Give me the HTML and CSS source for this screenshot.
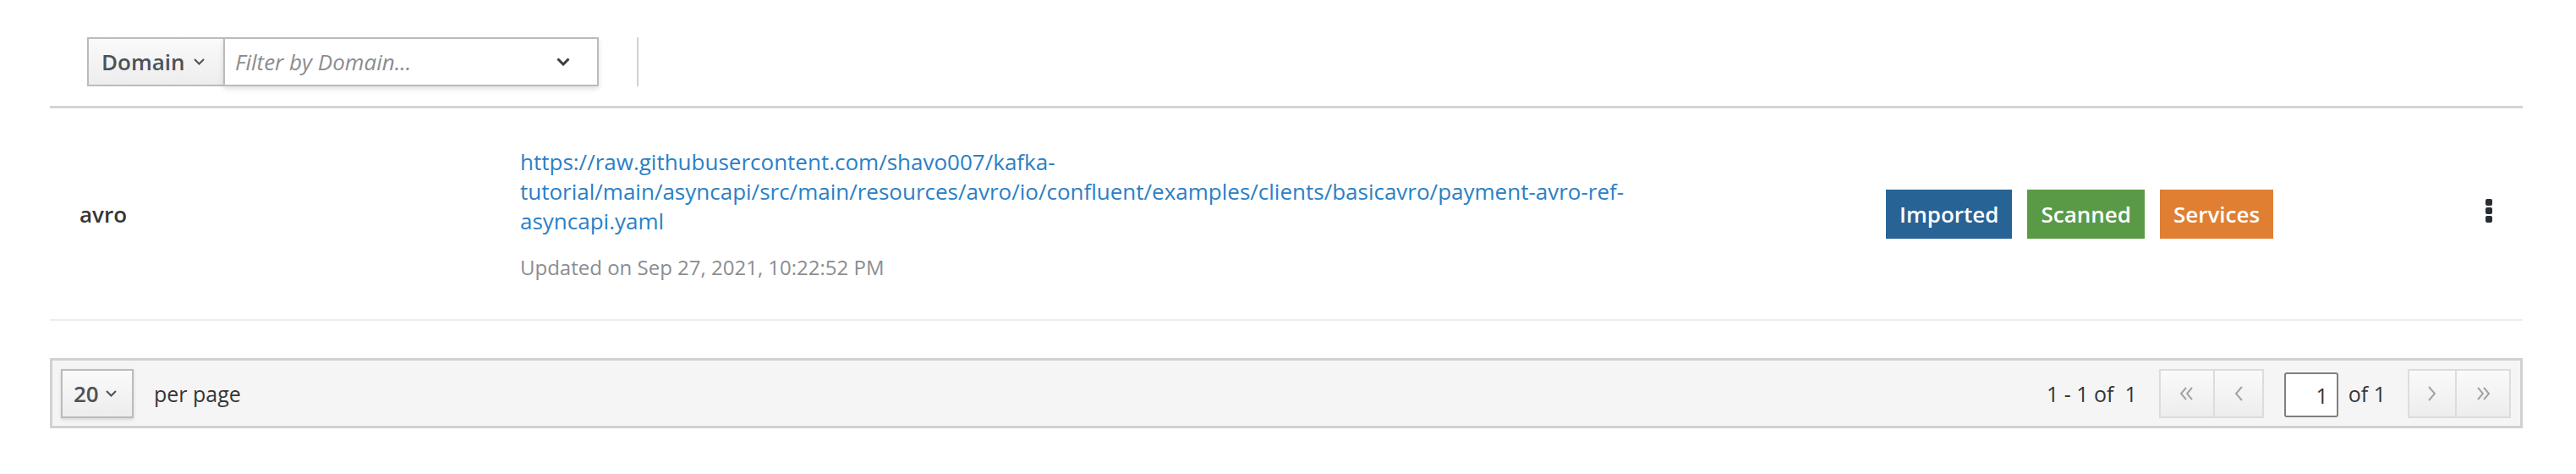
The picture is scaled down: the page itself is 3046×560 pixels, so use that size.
FILE: index.html
```html
<!DOCTYPE html>
<html lang="en">
<head>
<meta charset="utf-8">
<title>Domains</title>
<link rel="stylesheet" href="styles.css">
</head>
<body>
<div class="page">
  <div class="toolbar">
    <div class="filter">
      <button class="dd-btn" type="button">Domain
        <svg class="chev-sm" width="13" height="8" viewBox="0 0 13 8"><polyline points="1,1 6.5,6.5 12,1" fill="none" stroke="#4d5258" stroke-width="2"/></svg>
      </button>
      <div class="typeahead">
        <span class="placeholder">Filter by Domain...</span>
        <svg class="chev-md" width="16" height="10" viewBox="0 0 16 10"><polyline points="1.5,1.5 8,8 14.5,1.5" fill="none" stroke="#3a3f44" stroke-width="3"/></svg>
      </div>
    </div>
    <div class="sep"></div>
  </div>

  <div class="list">
    <div class="row">
      <div class="name">avro</div>
      <div class="desc">
        <a class="url" href="#">https://raw.githubusercontent.com/shavo007/kafka-tutorial/main/asyncapi/src/main/resources/avro/io/confluent/examples/clients/basicavro/payment-avro-ref-asyncapi.yaml</a>
        <div class="updated">Updated on Sep 27, 2021, 10:22:52 PM</div>
      </div>
      <div class="labels">
        <span class="label label-blue">Imported</span>
        <span class="label label-green">Scanned</span>
        <span class="label label-orange">Services</span>
      </div>
      <div class="kebab" aria-label="Actions">
        <span class="dot"></span><span class="dot"></span><span class="dot"></span>
      </div>
    </div>
  </div>

  <div class="pager">
    <div class="pager-left">
      <button class="per-btn" type="button">20
        <svg class="chev-sm" width="13" height="8" viewBox="0 0 13 8"><polyline points="1,1 6.5,6.5 12,1" fill="none" stroke="#4d5258" stroke-width="2"/></svg>
      </button>
      <span class="per-text">per page</span>
    </div>
    <div class="pager-right">
      <span class="range">1 - 1 of&nbsp; 1</span>
      <div class="btn-group">
        <button class="pg-btn first" type="button">
          <svg width="22" height="18" viewBox="0 0 22 18"><polyline points="10,2 4,9 10,16" fill="none" stroke="#a3a3a3" stroke-width="2"/><polyline points="17,2 11,9 17,16" fill="none" stroke="#a3a3a3" stroke-width="2"/></svg>
        </button>
        <button class="pg-btn prev" type="button">
          <svg width="12" height="20" viewBox="0 0 12 20"><polyline points="10,2 3,10 10,18" fill="none" stroke="#a3a3a3" stroke-width="2"/></svg>
        </button>
      </div>
      <div class="page-input">1</div>
      <span class="of">of 1</span>
      <div class="btn-group">
        <button class="pg-btn next" type="button">
          <svg width="12" height="20" viewBox="0 0 12 20"><polyline points="2,2 9,10 2,18" fill="none" stroke="#a3a3a3" stroke-width="2"/></svg>
        </button>
        <button class="pg-btn last" type="button">
          <svg width="22" height="18" viewBox="0 0 22 18"><polyline points="5,2 11,9 5,16" fill="none" stroke="#a3a3a3" stroke-width="2"/><polyline points="12,2 18,9 12,16" fill="none" stroke="#a3a3a3" stroke-width="2"/></svg>
        </button>
      </div>
    </div>
  </div>
</div>
</body>
</html>
```

FILE: styles.css
```css
* { box-sizing: border-box; }

html, body {
  margin: 0;
  padding: 0;
  background: #ffffff;
  font-family: "Open Sans", "Liberation Sans", sans-serif;
  color: #363636;
}

.page {
  width: 3046px;
  padding: 0 63px 0 59px;
}

/* toolbar */
.toolbar {
  height: 128px;
  padding: 44px 0 0 44px;
  display: flex;
  align-items: flex-start;
  border-bottom: 3px solid #d4d4d4;
}

.filter {
  display: flex;
  height: 58px;
}

.dd-btn {
  width: 161px;
  height: 58px;
  margin: 0;
  padding: 0 0 0 15px;
  display: flex;
  align-items: center;
  gap: 10px;
  border: 2px solid #bbbbbb;
  border-right: 0;
  background: linear-gradient(#fafafa, #ededed);
  font-family: "Open Sans", "Liberation Sans", sans-serif;
  font-size: 26px;
  font-weight: 600;
  color: #4d5258;
  cursor: pointer;
}

.typeahead {
  width: 444px;
  height: 58px;
  padding: 0 32px 0 12px;
  display: flex;
  align-items: center;
  justify-content: space-between;
  border: 2px solid #bbbbbb;
  background: #ffffff;
  box-shadow: 0 3px 6px rgba(0, 0, 0, 0.12);
}

.placeholder {
  font-size: 26px;
  font-style: italic;
  color: #8b8d8f;
}

.sep {
  width: 2px;
  height: 58px;
  margin-left: 45px;
  background: #d1d1d1;
}

/* list row */
.row {
  height: 251px;
  display: flex;
  align-items: center;
  border-bottom: 2px solid #ededed;
}

.name {
  width: 556px;
  padding-left: 35px;
  font-size: 26px;
  font-weight: 600;
  line-height: 34px;
  color: #363636;
  flex: 0 0 auto;
}

.desc {
  flex: 0 0 1400px;
  font-size: 24px;
  line-height: 34px;
  margin-top: 2px;
}

.url {
  font-size: 26px;
  color: #2a80c6;
  text-decoration: none;
}

.updated {
  margin-top: 20px;
  color: #8b8d8f;
}

.labels {
  margin-left: 215px;
  display: flex;
  gap: 18px;
}

.label {
  height: 58px;
  padding: 0 16px;
  display: inline-flex;
  align-items: center;
  font-size: 26px;
  font-weight: 600;
  color: #ffffff;
}

.label-blue { background: #286396; }
.label-green { background: #5a9a46; }
.label-orange { background: #e07f32; }

.kebab {
  margin-left: auto;
  margin-right: 36px;
  display: flex;
  flex-direction: column;
  gap: 2px;
  margin-top: -8px;
}

.dot {
  width: 8px;
  height: 8px;
  border-radius: 2px;
  background: #292e34;
}

/* pagination */
.pager {
  margin-top: 44px;
  height: 83px;
  padding: 0 11px 0 10px;
  display: flex;
  align-items: center;
  justify-content: space-between;
  border: 3px solid #d1d1d1;
  background: #f5f5f5;
}

.pager-left {
  display: flex;
  align-items: center;
}

.per-btn {
  width: 86px;
  height: 58px;
  margin: 0;
  padding: 0 0 0 13px;
  display: flex;
  align-items: center;
  gap: 8px;
  border: 2px solid #bbbbbb;
  background: linear-gradient(#fafafa, #ededed);
  box-shadow: 0 2px 4px rgba(0, 0, 0, 0.12);
  font-family: "Open Sans", "Liberation Sans", sans-serif;
  font-size: 26px;
  font-weight: 600;
  color: #4d5258;
}

.per-text {
  margin-left: 24px;
  font-size: 25px;
  color: #363636;
}

.pager-right {
  display: flex;
  align-items: center;
  font-size: 25px;
  color: #363636;
}

.range {
  margin-right: 26px;
}

.btn-group {
  display: flex;
  height: 58px;
}

.pg-btn {
  height: 58px;
  margin: 0;
  padding: 0;
  display: flex;
  align-items: center;
  justify-content: center;
  border: 2px solid #dcdcdc;
  background: linear-gradient(#fafafa, #ededed);
}

.pg-btn + .pg-btn { border-left-width: 0; }

.pg-btn.first { width: 66px; }
.pg-btn.prev { width: 58px; }
.pg-btn.next { width: 58px; }
.pg-btn.last { width: 64px; }

.page-input {
  width: 64px;
  height: 53px;
  margin: 4px 0 0 24px;
  padding-right: 10px;
  display: flex;
  align-items: center;
  justify-content: flex-end;
  border: 2px solid #7d7f82;
  border-radius: 3px;
  background: #ffffff;
  font-size: 25px;
  color: #363636;
}

.of {
  margin: 0 26px 0 12px;
}
```
